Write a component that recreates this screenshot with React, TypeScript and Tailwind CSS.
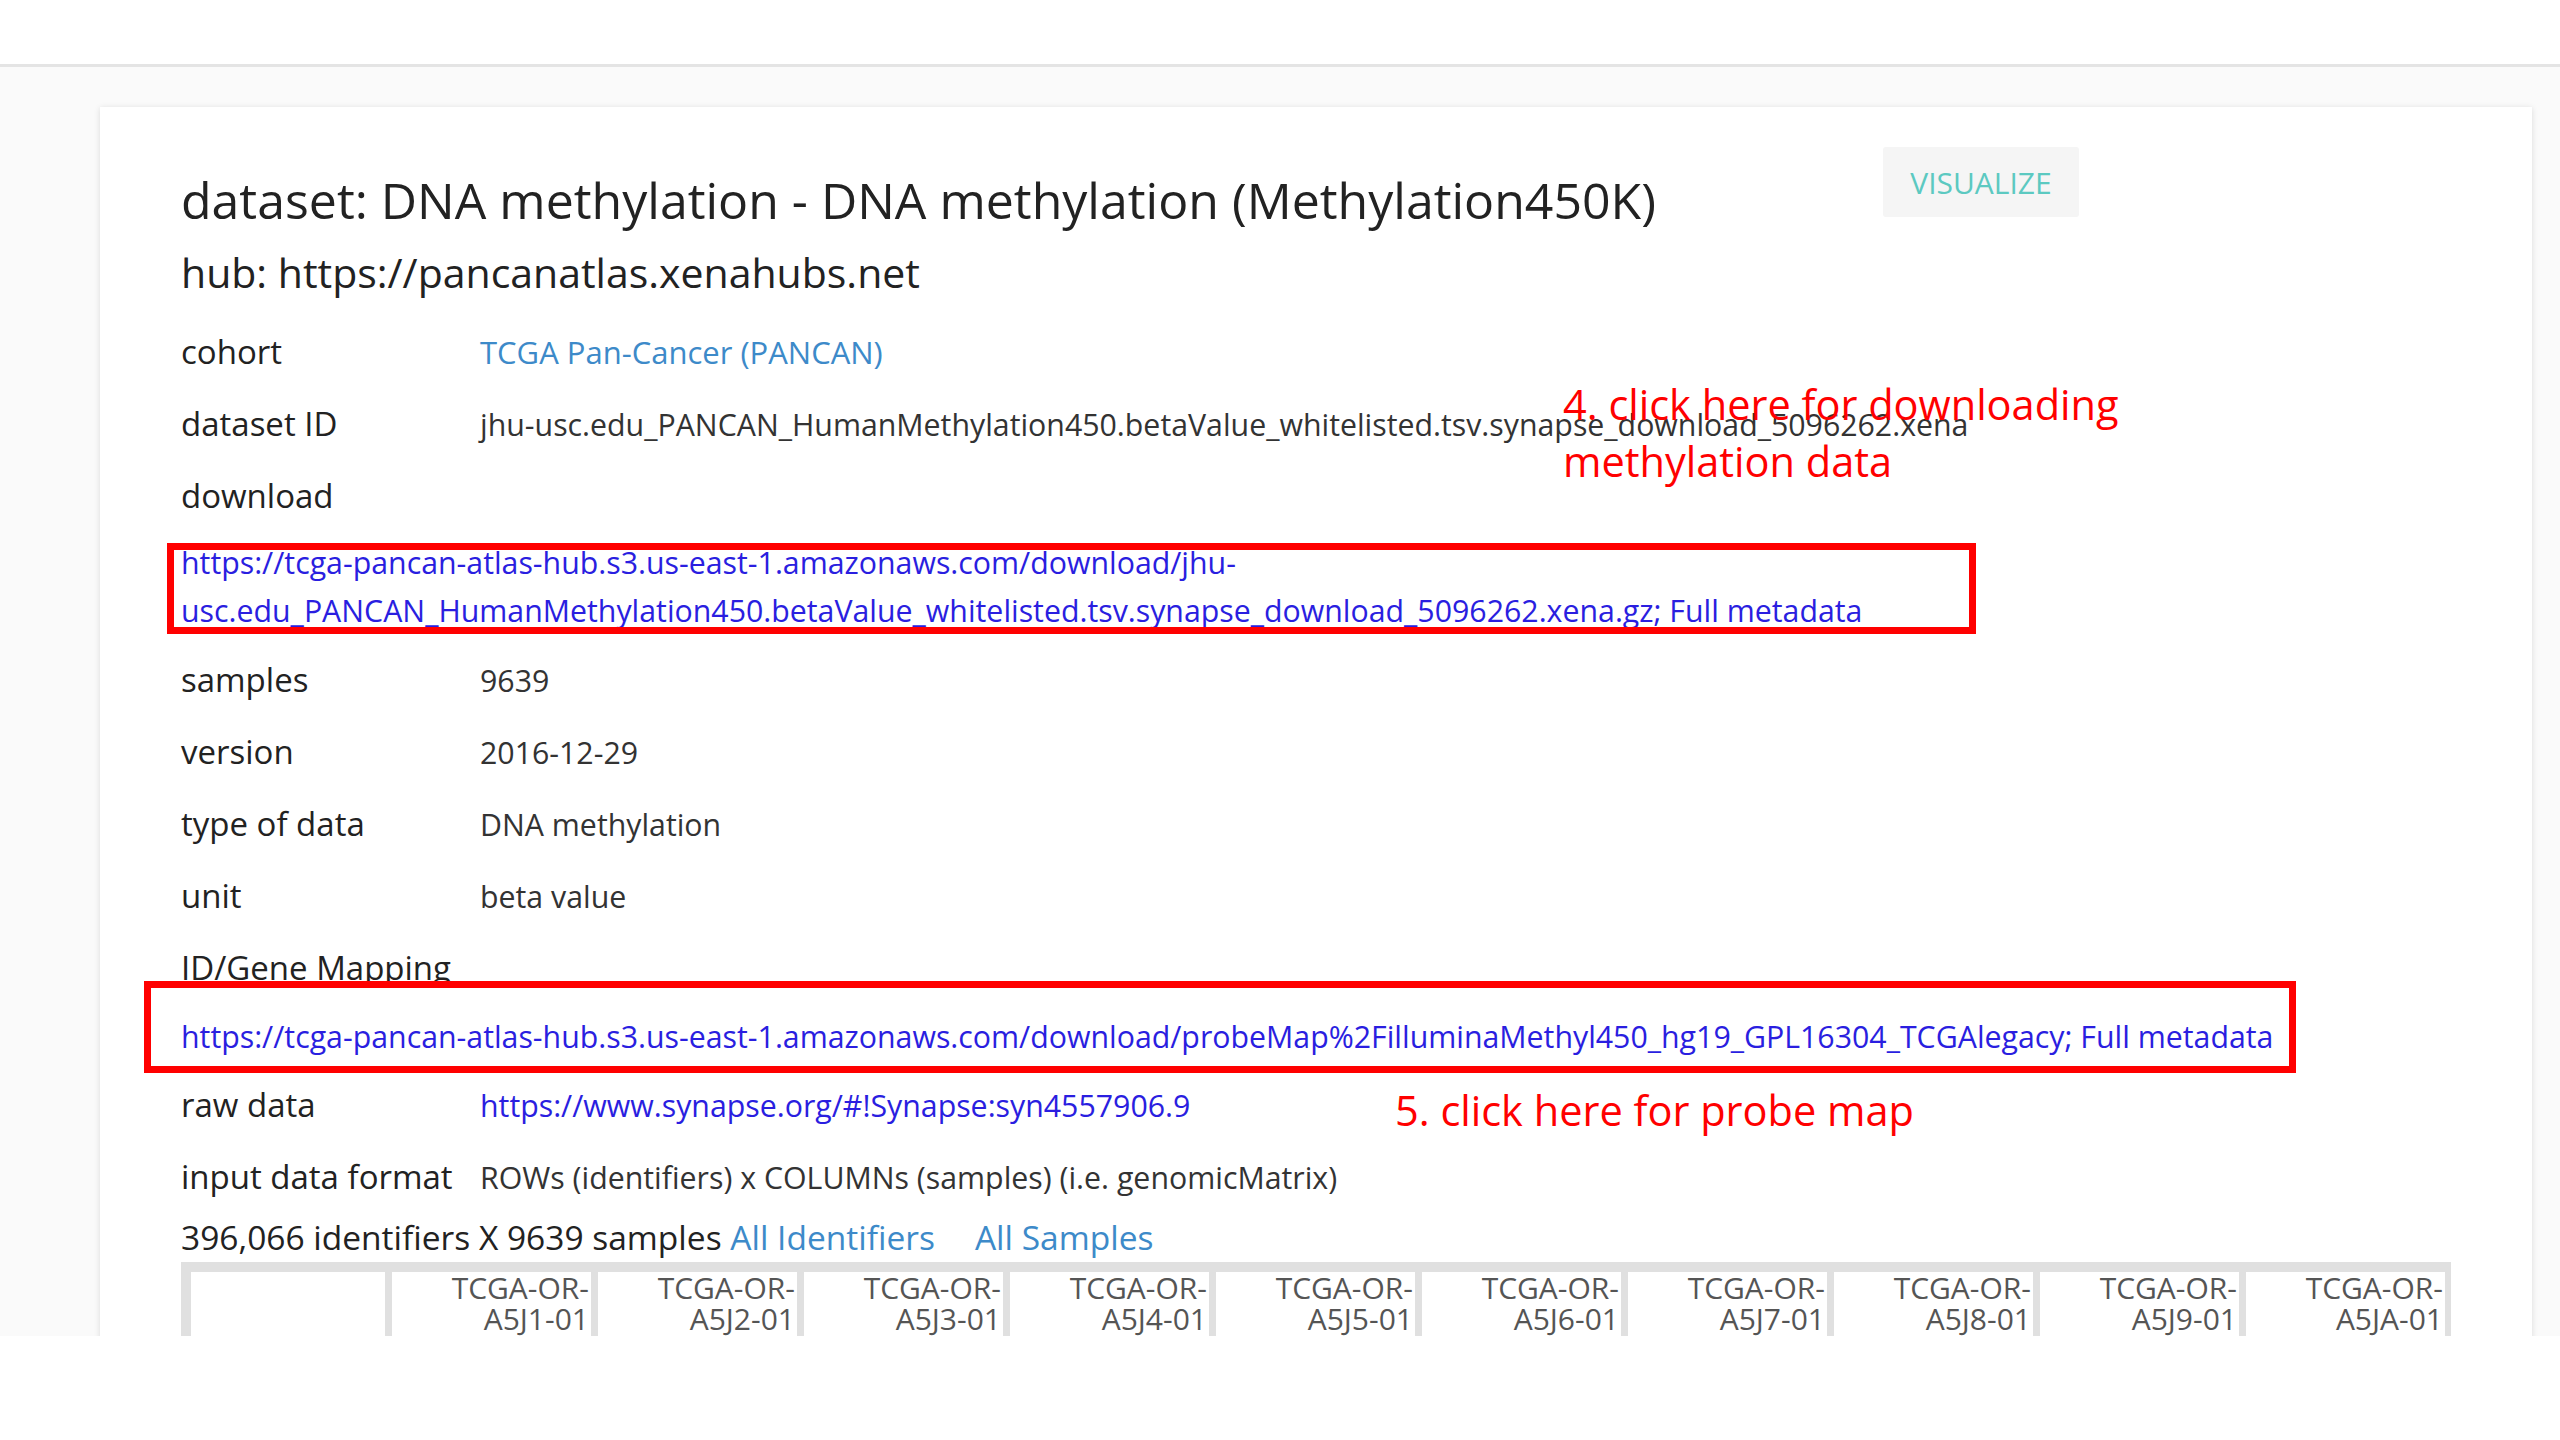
const rows1 = [
  { label: "cohort", value: "TCGA Pan-Cancer (PANCAN)", kind: "soft" },
  {
    label: "dataset ID",
    value:
      "jhu-usc.edu_PANCAN_HumanMethylation450.betaValue_whitelisted.tsv.synapse_download_5096262.xena",
    kind: "text",
  },
  { label: "download", value: "", kind: "text" },
];

const rows2 = [
  { label: "samples", value: "9639" },
  { label: "version", value: "2016-12-29" },
  { label: "type of data", value: "DNA methylation" },
  { label: "unit", value: "beta value" },
  { label: "ID/Gene Mapping", value: "" },
];

const samples = ["A5J1", "A5J2", "A5J3", "A5J4", "A5J5", "A5J6", "A5J7", "A5J8", "A5J9", "A5JA"];

function Row({ label, children }: { label: string; children?: React.ReactNode }) {
  return (
    <div className="flex h-[72px] items-baseline leading-[72px]">
      <div className="w-[299px] shrink-0 text-[33px] text-[#222]">{label}</div>
      <div className="text-[30.3px] text-[#333]">{children}</div>
    </div>
  );
}

export default function App() {
  return (
    <div className="min-h-screen bg-white font-['Open_Sans',sans-serif]">
      <div className="h-[1336px] overflow-hidden bg-[#fafafa]">
        <header className="h-[67px] border-b-[3px] border-[#e4e4e4] bg-white" />
        <main className="pl-[100px] pr-[28px] pt-[40px]">
          <section className="relative bg-white pl-[81px] pr-[81px] pt-[63px] shadow-[0_1px_6px_rgba(0,0,0,0.13)]">
            <div className="flex items-start">
              <h1 className="w-[1702px] shrink-0 text-[50px] leading-[60px] font-normal text-[#222]">
                dataset: DNA methylation - DNA methylation (Methylation450K)
              </h1>
              <button className="mt-[-23px] h-[70px] w-[196px] rounded-[3px] bg-[#f5f5f5] text-[30px] uppercase text-[#5cc9c1]">
                Visualize
              </button>
            </div>
            <h2 className="mt-[17px] text-[41px] leading-[50px] font-normal text-[#222]">
              hub: https://pancanatlas.xenahubs.net
            </h2>

            <div className="mt-[19px]">
              {rows1.map((r) => (
                <Row key={r.label} label={r.label}>
                  {r.kind === "soft" ? (
                    <span className="text-[31px] text-[#3d8ac9]">{r.value}</span>
                  ) : (
                    r.value
                  )}
                </Row>
              ))}
            </div>
            <p className="mt-[7px] text-[30.3px] leading-[48px] text-[#2a1ee0]">
              https://tcga-pancan-atlas-hub.s3.us-east-1.amazonaws.com/download/jhu-usc.edu_PANCAN_HumanMethylation450.betaValue_whitelisted.tsv.synapse_download_5096262.xena.gz;{" "}
              Full metadata
            </p>

            <div className="mt-[9px]">
              {rows2.map((r) => (
                <Row key={r.label} label={r.label}>
                  {r.value}
                </Row>
              ))}
            </div>
            <p className="mt-[9px] whitespace-nowrap text-[30.3px] leading-[48px] text-[#2a1ee0]">
              https://tcga-pancan-atlas-hub.s3.us-east-1.amazonaws.com/download/probeMap%2FilluminaMethyl450_hg19_GPL16304_TCGAlegacy; Full metadata
            </p>

            <div className="mt-[8px]">
              <Row label="raw data">
                <span className="text-[#2a1ee0]">https://www.synapse.org/#!Synapse:syn4557906.9</span>
              </Row>
              <Row label="input data format">ROWs (identifiers) x COLUMNs (samples) (i.e. genomicMatrix)</Row>
            </div>

            <div className="mt-[4px] text-[33.5px] leading-[40px] text-[#222]">
              396,066 identifiers X 9639 samples <span className="text-[#3d8ac9]">All Identifiers</span>
              <span className="ml-[40px] text-[#3d8ac9]">All Samples</span>
            </div>

            <div className="mt-[5px] flex gap-[7px] bg-[#e0e0e0] pl-[10px] pr-[6px] pt-[10px]">
              <div className="h-[64px] w-[194px] shrink-0 bg-white" />
              {samples.map((s) => (
                <div
                  key={s}
                  className="h-[64px] w-[199px] shrink-0 bg-white pr-[2px] text-right text-[30px] leading-[31px] text-[#555]"
                >
                  TCGA-OR-
                  <br />
                  {s}-01
                </div>
              ))}
            </div>

            {/* annotation overlays */}
            <div className="pointer-events-none absolute left-[67px] top-[436px] h-[91px] w-[1809px] border-[7px] border-[#ff0000]" />
            <div className="pointer-events-none absolute left-[44px] top-[874px] h-[92px] w-[2152px] border-[7px] border-[#ff0000]" />
            <div className="pointer-events-none absolute left-[1463px] top-[269px] text-[41.5px] leading-[57px] text-[#ff0000]">
              4. click here for downloading
              <br />
              methylation data
            </div>
            <div className="pointer-events-none absolute left-[1295px] top-[975px] text-[41.5px] leading-[57px] text-[#ff0000]">
              5. click here for probe map
            </div>
            <div className="h-[200px]" />
          </section>
        </main>
      </div>
    </div>
  );
}
